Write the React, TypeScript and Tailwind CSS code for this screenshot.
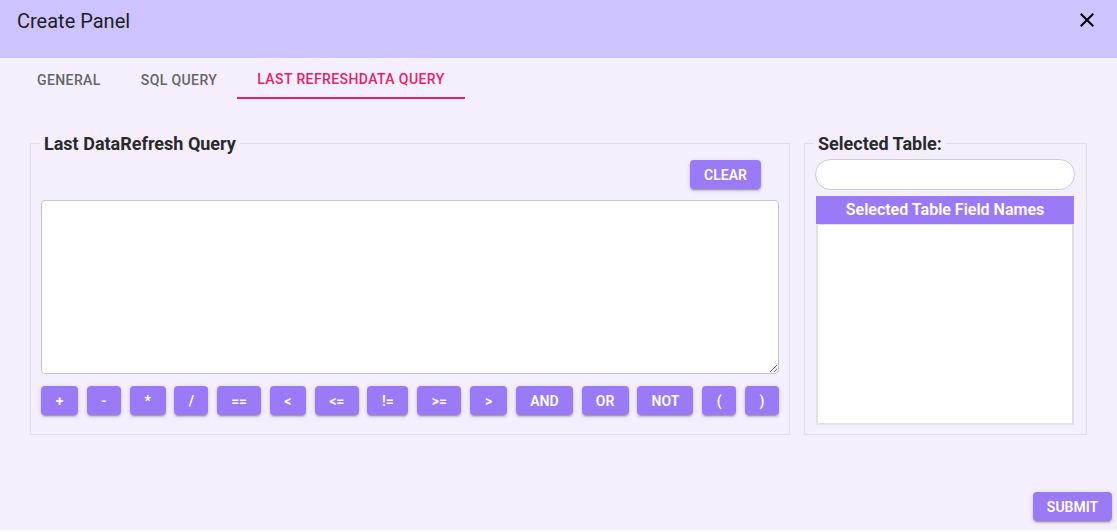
import React from "react";

const ops: { label: string; w: string }[] = [
  { label: "+", w: "w-[37px]" },
  { label: "-", w: "w-[34px]" },
  { label: "*", w: "w-[36px]" },
  { label: "/", w: "w-[34px]" },
  { label: "==", w: "w-[44px]" },
  { label: "<", w: "w-[36px]" },
  { label: "<=", w: "w-[44px]" },
  { label: "!=", w: "w-[41px]" },
  { label: ">=", w: "w-[44px]" },
  { label: ">", w: "w-[37px]" },
  { label: "AND", w: "w-[57px]" },
  { label: "OR", w: "w-[47px]" },
  { label: "NOT", w: "w-[56px]" },
  { label: "(", w: "w-[34px]" },
  { label: ")", w: "w-[34px]" },
];

const btn =
  "h-[29px] rounded-[4px] bg-[#9b7af8] text-white text-[14px] font-semibold leading-none flex items-center justify-center shadow-[0_3px_1px_-2px_rgba(0,0,0,0.2),0_2px_2px_0_rgba(0,0,0,0.14),0_1px_5px_0_rgba(0,0,0,0.12)]";

const tab = "px-5 h-[41px] pt-[4px] flex items-center text-[14px] font-medium uppercase tracking-[0.4px]";

export default function App() {
  return (
    <div className="w-full h-[532px] bg-white font-['Roboto',sans-serif]">
      <div className="h-[530px] bg-[#f5eefd] flex flex-col">
        {/* Header */}
        <div className="h-[58px] bg-[#cdc3ff] flex items-start justify-between pl-[17px] pr-[18px]">
          <div className="pt-[6px] text-[20px] leading-[30px] text-[#1e1e1e]">Create Panel</div>
          <svg className="mt-[8px]" width="24" height="24" viewBox="0 0 24 24" fill="#000">
            <path d="M19 6.41 17.59 5 12 10.59 6.41 5 5 6.41 10.59 12 5 17.59 6.41 19 12 13.41 17.59 19 19 17.59 13.41 12z" />
          </svg>
        </div>

        {/* Tabs */}
        <div className="h-[42px] flex pl-[17px]">
          <div className={`${tab} text-[#666]`}>General</div>
          <div className={`${tab} text-[#666]`}>SQL Query</div>
          <div className={`${tab} text-[#e91e63] border-b-2 border-[#e91e63]`}>Last RefreshData Query</div>
        </div>

        {/* Content */}
        <div className="flex gap-[14px] px-[30px] mt-[33px]">
          <fieldset className="flex-1 border border-[#e1dce6] px-[10px] pt-[6px] pb-[19px]">
            <legend className="-ml-[1px] px-[4px] text-[18px] leading-[21px] font-bold text-[#2a2a2a]">
              Last DataRefresh Query
            </legend>
            <div className="flex justify-end">
              <button className={`${btn} w-[71px] mr-[18px]`}>CLEAR</button>
            </div>
            <textarea className="block mt-[11px] w-full h-[174px] bg-white border border-[#c9c6cc] rounded-[4px] outline-none" />
            <div className="mt-[12px] flex justify-between">
              {ops.map((o) => (
                <button key={o.label} className={`${btn} ${o.w}`}>
                  {o.label}
                </button>
              ))}
            </div>
          </fieldset>

          <fieldset className="w-[283px] border border-[#e1dce6] pl-[10px] pr-[11px] pt-[5px] pb-[9px]">
            <legend className="-ml-[1px] px-[4px] text-[18px] leading-[21px] font-bold text-[#2a2a2a]">
              Selected Table:
            </legend>
            <input className="block w-[260px] h-[31px] rounded-full bg-white border border-[#cfcbd3] outline-none" />
            <div className="mt-[6px] ml-[1px] w-[258px] h-[28px] bg-[#9b7af8] text-white text-[16px] font-semibold flex items-center justify-center">
              Selected Table Field Names
            </div>
            <div className="ml-[1px] w-[258px] h-[201px] bg-white border-2 border-t border-[#e2e0e4]" />
          </fieldset>
        </div>

        {/* Footer */}
        <div className="mt-auto flex justify-end pr-[5px] pb-[9px]">
          <button className={`${btn} w-[79px]`}>SUBMIT</button>
        </div>
      </div>
    </div>
  );
}
